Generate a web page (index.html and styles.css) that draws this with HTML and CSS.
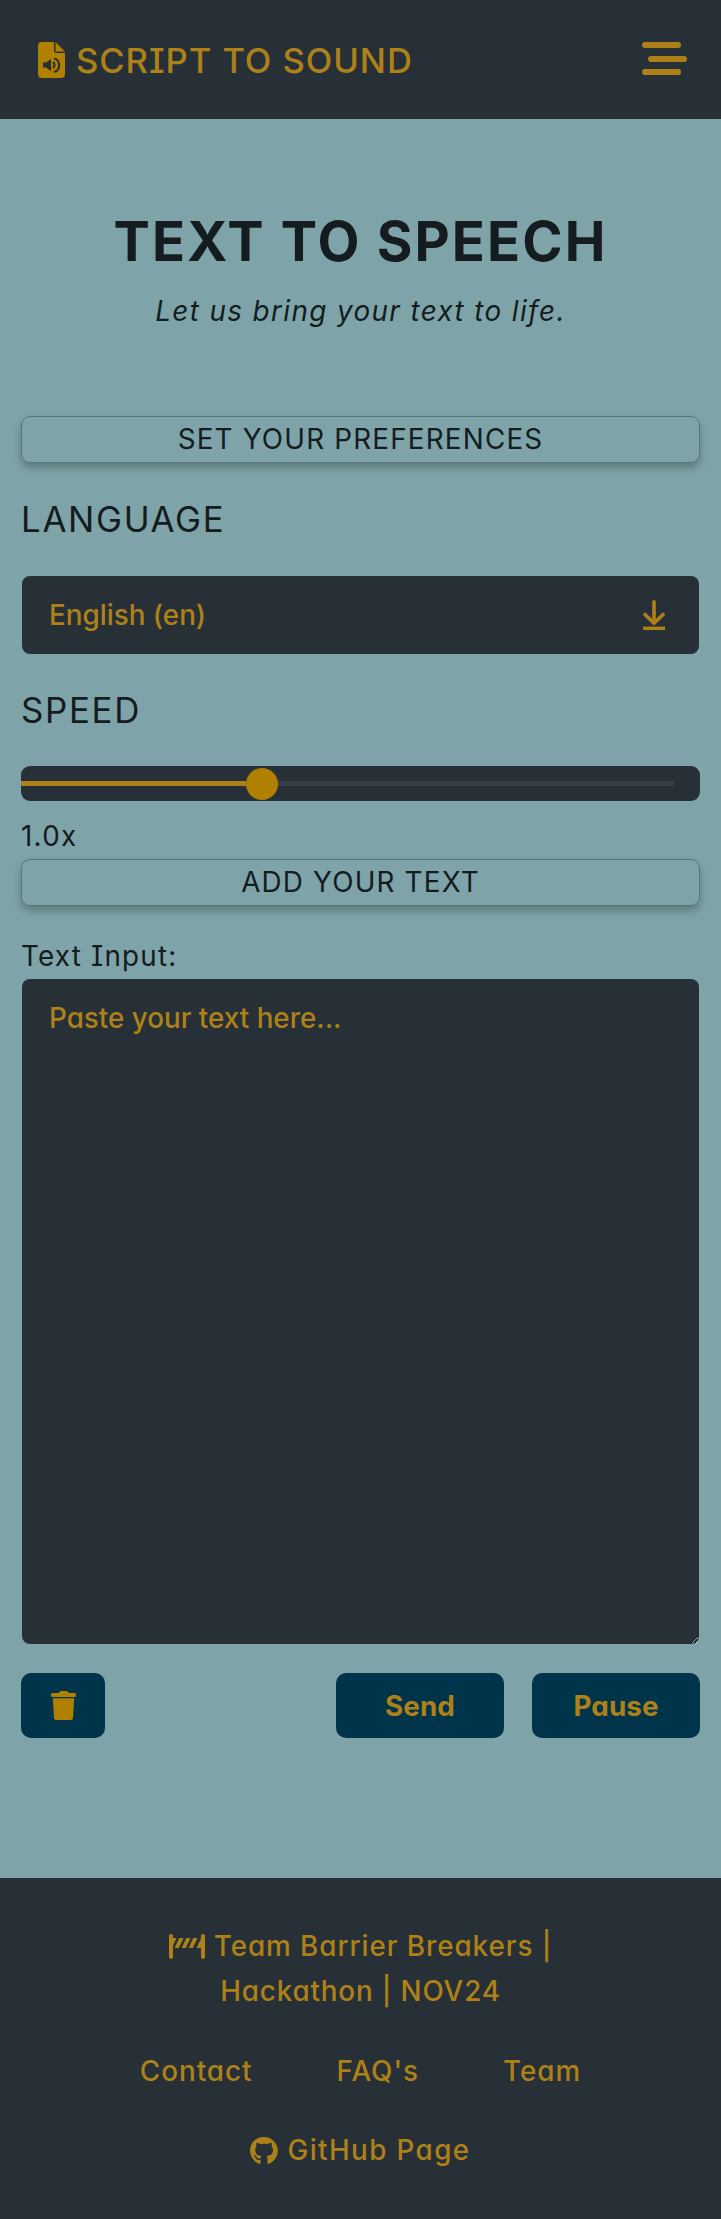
FILE: index.html
```
<!DOCTYPE html>
<html lang="en">
<head>
<meta charset="utf-8">
<title>Script to Sound</title>
<link rel="stylesheet" href="styles.css">
</head>
<body>
<header class="header">
  <a class="brand">
    <svg class="brand-icon" viewBox="0 0 27 36" width="27" height="36">
      <path fill="currentColor" d="M4 0H16V8.5Q16 11 18.500 11H27V32Q27 36 23 36H4Q0 36 0 32V4Q0 0 4 0ZM17.500 0 27 9.500H17.500Z"/>
      <path class="cut-fill" d="M5 20.500H8L13 17V29L8 25.500H5Z"/>
      <path class="cut-line" d="M15.500 20.500Q17.600 23 15.500 25.500M16.800 16.600C22.500 18.500 22.500 28 16.800 29.800"/>
    </svg>
    <span>SCRIPT TO SOUND</span>
  </a>
  <div class="menu"><i class="bar"></i><i class="bar bar-shift"></i><i class="bar"></i></div>
</header>
<main class="main">
  <h1 class="title">TEXT TO SPEECH</h1>
  <p class="subtitle">Let us bring your text to life.</p>
  <div class="panel-head">SET YOUR PREFERENCES</div>
  <h2 class="label">LANGUAGE</h2>
  <div class="select">
    <span>English (en)</span>
    <svg viewBox="0 0 22 30" width="22" height="30" fill="none" stroke="currentColor">
      <path stroke-width="3.600" stroke-linecap="round" stroke-linejoin="round" d="M11 1.800V23M2 14.500 11 23.300 20 14.500"/>
      <path stroke-width="3.400" d="M0 28.300H22"/>
    </svg>
  </div>
  <h2 class="label label-speed">SPEED</h2>
  <div class="slider"><i class="fill"></i><i class="thumb"></i><i class="rest"></i></div>
  <div class="speed-value">1.0x</div>
  <div class="panel-head panel-add">ADD YOUR TEXT</div>
  <label class="input-label" for="text">Text Input:</label>
  <textarea class="input" id="text" placeholder="Paste your text here..."></textarea>
  <div class="actions">
    <button class="btn btn-icon" aria-label="Clear">
      <svg viewBox="0 0 25 29" width="25" height="29" fill="currentColor">
        <path d="M8 1.500Q8.500 0 10 0H15.500Q17 0 17.500 1.500L18 2H23.500Q25 2 25 3.500V5Q25 6 23.500 6H1.500Q0 6 0 5V3.500Q0 2 1.500 2H7.500ZM1.800 7.200H23.200L22 27Q21.900 29 20 29H5Q3.100 29 3 27Z"/>
      </svg>
    </button>
    <button class="btn btn-send">Send</button>
    <button class="btn btn-pause">Pause</button>
  </div>
</main>
<footer class="footer">
  <div class="team">
    <div class="team-row">
      <svg viewBox="0 0 36 25" width="36" height="25" fill="currentColor">
        <path d="M0 1.800Q0 0 2 0T4 1.800V4H7.500L4 11.500V23.200Q4 25 2 25T0 23.200ZM32 1.800Q32 0 34 0T36 1.800V23.200Q36 25 34 25T32 23.200V14H27.500L32 4.500ZM10.300 4H14.500L9.800 14H5.600ZM17.300 4H21.500L16.800 14H12.600ZM24.300 4H28.500L23.800 14H19.600Z"/>
      </svg>
      <span>Team Barrier Breakers |</span>
    </div>
    <div class="event">Hackathon | NOV24</div>
  </div>
  <nav class="links"><a class="link-contact">Contact</a><a class="link-faq">FAQ's</a><a class="link-team">Team</a></nav>
  <a class="github">
    <svg viewBox="0 8 496 484" width="28" height="27" fill="currentColor">
      <path d="M165.900 397.400c0 2-2.300 3.600-5.200 3.600-3.300.3-5.600-1.300-5.600-3.600 0-2 2.300-3.600 5.200-3.600 3-.3 5.600 1.300 5.600 3.600zm-31.100-4.500c-.7 2 1.300 4.300 4.300 4.900 2.600 1 5.600 0 6.200-2s-1.300-4.300-4.300-5.200c-2.600-.7-5.500.3-6.200 2.300zm44.200-1.700c-2.900.7-4.900 2.600-4.600 4.900.3 2 2.900 3.300 5.900 2.600 2.900-.7 4.900-2.600 4.600-4.600-.3-1.900-3-3.200-5.900-2.900zM244.800 8C106.100 8 0 113.300 0 252c0 110.900 69.800 205.800 169.500 239.200 12.800 2.300 17.300-5.600 17.300-12.100 0-6.200-.3-40.400-.3-61.400 0 0-70 15-84.700-29.800 0 0-11.400-29.100-27.800-36.600 0 0-22.900-15.700 1.600-15.400 0 0 24.900 2 38.600 25.800 21.900 38.600 58.600 27.500 72.900 20.900 2.300-16 8.800-27.100 16-33.700-55.900-6.200-112.300-14.300-112.300-110.500 0-27.500 7.600-41.300 23.600-58.900-2.600-6.500-11.100-33.300 2.600-67.900 20.900-6.500 69 27 69 27 20-5.600 41.500-8.500 62.800-8.500s42.800 2.900 62.800 8.500c0 0 48.100-33.600 69-27 13.700 34.700 5.200 61.400 2.600 67.900 16 17.700 25.800 31.500 25.800 58.900 0 96.500-58.900 104.200-114.800 110.500 9.200 7.900 17 22.900 17 46.400 0 33.700-.3 75.400-.3 83.600 0 6.500 4.600 14.400 17.300 12.100C428.200 457.800 496 362.900 496 252 496 113.300 383.500 8 244.800 8z"/>
    </svg>
    <span>GitHub Page</span>
  </a>
</footer>
</body>
</html>
```
FILE: styles.css
```
* { box-sizing: border-box; }
body {
  margin: 0;
  background: #7ea4a9;
  color: #141c20;
  font: 400 27.800px/45px Inter, "Open Sans", sans-serif;
  font-feature-settings: "cv11", "cv08";
  letter-spacing: 1.2px;
}
svg { display: block; flex: none; }
.header {
  height: 119px;
  padding: 0 34px 0 38px;
  display: flex;
  align-items: center;
  justify-content: space-between;
  background: #263036;
  color: #ae8118;
}
.brand {
  display: flex;
  align-items: center;
  gap: 11px;
  padding-top: 1px;
  font-size: 34.6px;
  font-weight: 500;
  letter-spacing: .95px;
  white-space: nowrap;
}
.brand-icon { color: #b08000; }
.cut-fill { fill: #263036; }
.cut-line { fill: none; stroke: #263036; stroke-width: 2; stroke-linecap: round; }
.menu { width: 45px; display: flex; flex-direction: column; gap: 7.5px; padding-bottom: 2px; }
.bar { width: 39px; height: 6px; border-radius: 3px; background: #ae8118; }
.bar-shift { margin-left: 6px; }
.main { height: 1759px; padding: 88px 21px 0; }
.title {
  margin: 0;
  font-size: 54.500px;
  line-height: 69px;
  font-weight: 700;
  letter-spacing: 2.1px;
  text-align: center;
}
.subtitle {
  margin: 0 0 71px;
  padding-top: 1px;
  line-height: 68px;
  font-style: italic;
  letter-spacing: 1.4px;
  text-align: center;
}
.panel-head {
  height: 47px;
  border: 1px solid #54777b;
  border-radius: 9px;
  box-shadow: 0 5px 8px rgba(0, 0, 0, .25);
  text-align: center;
  letter-spacing: 1.2px;
}
.label {
  margin: 0;
  font-size: 34.8px;
  line-height: 113px;
  font-weight: 400;
  letter-spacing: 1.7px;
}
.label-speed { line-height: 112px; }
.select {
  height: 78px;
  margin: 0 1px;
  padding: 0 34px 0 27px;
  display: flex;
  align-items: center;
  justify-content: space-between;
  border-radius: 8px;
  background: #263036;
  color: #ae8118;
  font-weight: 500;
  letter-spacing: 0;
}
.slider {
  height: 35px;
  display: flex;
  align-items: center;
  border-radius: 9px;
  background: #263036;
}
.fill { width: 225px; height: 5px; background: #ae8118; }
.thumb { width: 32px; height: 32px; border-radius: 50%; background: #b08000; }
.rest { width: 396px; height: 5px; background: #353f45; }
.speed-value { height: 58px; padding-top: 13px; letter-spacing: 1.3px; }
.input-label { display: block; height: 73px; padding-top: 28px; }
.input {
  display: block;
  width: 677px;
  height: 665px;
  margin: 0 1px;
  padding: 17px 27px;
  border: 0;
  border-radius: 8px;
  background: #263036;
  color: #ae8118;
  font: inherit;
  font-feature-settings: inherit;
  font-weight: 500;
  letter-spacing: 0;
}
.input::placeholder { color: #ae8118; opacity: 1; }
.actions { display: flex; gap: 28px; margin-top: 29px; }
.btn {
  width: 168px;
  height: 65px;
  padding: 2px 0 0;
  border: 0;
  border-radius: 10px;
  background: #00344a;
  color: #ae8118;
  font: inherit;
  font-feature-settings: inherit;
  font-weight: 700;
  letter-spacing: .1px;
}
.btn-icon {
  width: 84px;
  margin-right: auto;
  padding: 0;
  display: flex;
  align-items: center;
  justify-content: center;
  color: #b08000;
}
.footer {
  height: 341px;
  padding-top: 46px;
  background: #263036;
  color: #ae8118;
  font-weight: 500;
  white-space: nowrap;
}
.team-row { display: flex; align-items: center; justify-content: center; gap: 9px; letter-spacing: .95px; }
.event { text-align: center; letter-spacing: .85px; }
.links { display: flex; justify-content: center; gap: 84px; margin-top: 35px; letter-spacing: 1px; }
.github { display: flex; align-items: center; justify-content: center; gap: 9px; margin-top: 34px; letter-spacing: 1.4px; }
```
